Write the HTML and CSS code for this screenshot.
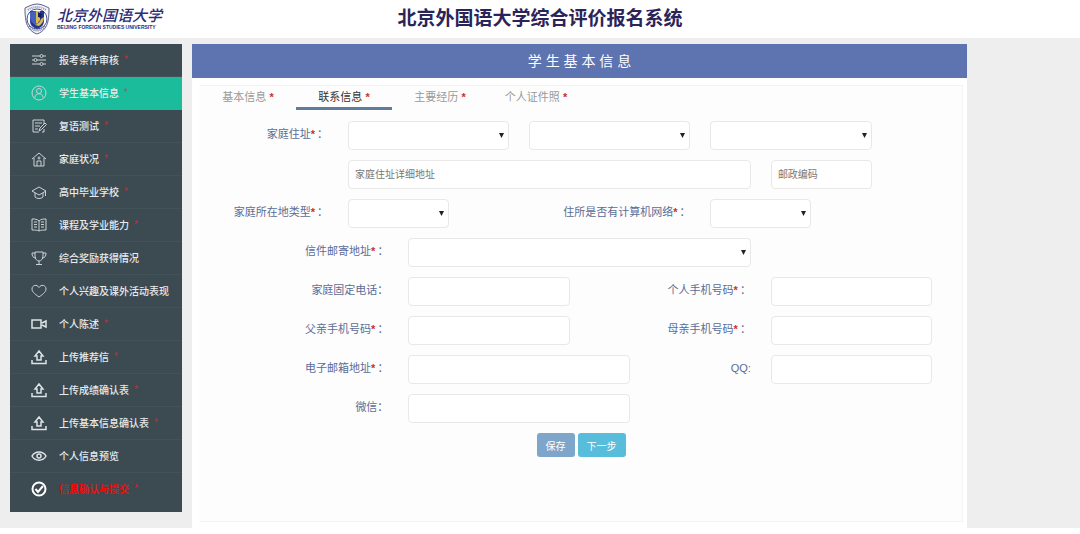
FILE: index.html
```html
<!DOCTYPE html>
<html lang="zh-CN">
<head>
<meta charset="utf-8">
<title>北京外国语大学综合评价报名系统</title>
<link rel="stylesheet" href="styles.css">
</head>
<body>
<header class="topbar">
  <a class="brand" href="#">
    <svg class="crest" viewBox="0 0 26 32" aria-hidden="true">
      <path d="M13 1C9 1 5 3 1 5c0 4 0 8 1 13 1 6 5 11 11 13 6-2 10-7 11-13 1-5 1-9 1-13-4-2-8-4-12-4z" fill="#f4f4fa" stroke="#5c628f" stroke-width="1"/>
      <path d="M4 7c5-4 13-4 18 0" fill="none" stroke="#8b90b5" stroke-width="2" stroke-dasharray="1 1"/>
      <circle cx="13" cy="16" r="10" fill="#fff" stroke="#4a5292" stroke-width="1"/>
      <path d="M6 8h14v10c0 5-4 7-7 8-3-1-7-3-7-8z" fill="#27348f"/>
      <path d="M6 9l6-1v14c-3-1-6-4-6-8z" fill="#4361bd"/>
      <path d="M12 8h4v9l-3 4-1-1zM17 16l3-2c0 4-2 7-5 9l-4-1c3-1 5-3 6-6z" fill="#d9bc4c"/>
      <path d="M14 9l4 2-1 4-3-1z" fill="#171d5b"/>
      <path d="M5 23c4 6 12 6 16 0" fill="none" stroke="#737aa8" stroke-width="2" stroke-dasharray="1 1"/>
    </svg>
    <span class="brand-text">
      <span class="brand-cn">北京外国语大学</span>
      <span class="brand-en">BEIJING FOREIGN STUDIES UNIVERSITY</span>
    </span>
  </a>
  <h1 class="system-title">北京外国语大学综合评价报名系统</h1>
</header>

<div class="layout">
  <nav class="sidebar" aria-label="报名步骤">
    <a class="step" href="#"><svg class="icon" viewBox="0 0 16 16"><path d="M1 4h8M12 4h3M1 8h2M6 8h9M1 12h8M12 12h3"/><circle cx="10.500" cy="4" r="1.500"/><circle cx="4.500" cy="8" r="1.500"/><circle cx="10.500" cy="12" r="1.500"/></svg><span>报考条件审核</span><i class="mark">*</i></a>
    <a class="step active" href="#" aria-current="page"><svg class="icon" viewBox="0 0 16 16"><circle cx="8" cy="8" r="7"/><circle cx="8" cy="6" r="2.500"/><path d="M4 12.500c0-5 8-5 8 0"/></svg><span>学生基本信息</span><i class="mark">*</i></a>
    <a class="step" href="#"><svg class="icon" viewBox="0 0 16 16"><path d="M13 6V2H2v12h6M13 11v3h-2M4 5h7M4 8h5M4 11h3M8 13l1-3 5-5 1.500 1.500-5 5z"/></svg><span>复语测试</span><i class="mark">*</i></a>
    <a class="step" href="#"><svg class="icon" viewBox="0 0 16 16"><path d="M1 8l7-6 7 6M3 7v8h10V7M6 15v-5h4v5"/><circle cx="8" cy="7" r="1"/></svg><span>家庭状况</span><i class="mark">*</i></a>
    <a class="step" href="#"><svg class="icon" viewBox="0 0 16 16"><path d="M1 7l7-4 7 4-7 4zM4 9v4c2 2 6 2 8 0V9M14.500 7v5"/></svg><span>高中毕业学校</span><i class="mark">*</i></a>
    <a class="step" href="#"><svg class="icon" viewBox="0 0 16 16"><path d="M8 4C6 2 4 2 1 2v11c3 0 5 0 7 1 2-1 4-1 7-1V2c-3 0-5 0-7 2zM8 4v10M3 5h3M3 7.500h3M3 10h3M10 5h3M10 7.500h3M10 10h3"/></svg><span>课程及学业能力</span><i class="mark">*</i></a>
    <a class="step" href="#"><svg class="icon" viewBox="0 0 16 16"><path d="M4 2h8v4c0 3-2 5-4 5S4 9 4 6zM4 3H1c0 3 1 5 4 5M12 3h3c0 3-1 5-4 5M8 11v3M5 14.500h6"/></svg><span>综合奖励获得情况</span></a>
    <a class="step" href="#"><svg class="icon" viewBox="0 0 16 16"><path d="M8 14C3 10.500 1 8.500 1 6c0-4 5-5 7-1.500C10 1 15 2 15 6c0 2.500-2 4.500-7 8z"/></svg><span>个人兴趣及课外活动表现</span></a>
    <a class="step" href="#"><svg class="icon bold" viewBox="0 0 16 16"><path d="M1 4h9v8H1zM11 7l4-2v6l-4-2"/></svg><span>个人陈述</span><i class="mark">*</i></a>
    <a class="step" href="#"><svg class="icon bold" viewBox="0 0 16 16"><path d="M6 11V7H4l4-5 4 5h-2v4zM1 11v3.500h14V11"/></svg><span>上传推荐信</span><i class="mark">*</i></a>
    <a class="step" href="#"><svg class="icon bold" viewBox="0 0 16 16"><path d="M6 11V7H4l4-5 4 5h-2v4zM1 11v3.500h14V11"/></svg><span>上传成绩确认表</span><i class="mark">*</i></a>
    <a class="step" href="#"><svg class="icon bold" viewBox="0 0 16 16"><path d="M6 11V7H4l4-5 4 5h-2v4zM1 11v3.500h14V11"/></svg><span>上传基本信息确认表</span><i class="mark">*</i></a>
    <a class="step" href="#"><svg class="icon bold" viewBox="0 0 16 16"><path d="M1 8c3-5.500 11-5.500 14 0-3 5.500-11 5.500-14 0z"/><circle cx="8" cy="8" r="2"/></svg><span>个人信息预览</span></a>
    <a class="step submit" href="#"><svg class="icon heavy" viewBox="0 0 16 16"><circle cx="8" cy="8" r="6.500"/><path d="M4.500 8l2.500 3 5-6"/></svg><span>信息确认与提交</span><i class="mark">*</i></a>
  </nav>

  <main class="panel">
    <h2 class="panel-title">学 生 基 本 信 息</h2>
    <div class="panel-body">
      <nav class="tabs" aria-label="信息分类">
        <a class="tab" href="#">基本信息 <b class="req">*</b></a>
        <a class="tab current" href="#" aria-current="true">联系信息 <b class="req">*</b></a>
        <a class="tab" href="#">主要经历 <b class="req">*</b></a>
        <a class="tab" href="#">个人证件照 <b class="req">*</b></a>
      </nav>
      <form>
        <div class="fields">
          <label class="to-8" for="province">家庭住址<b class="req">*</b>：</label>
          <select class="at-8 span-8" id="province"><option></option></select>
          <select class="at-17 span-8" aria-label="城市"><option></option></select>
          <select class="at-26 span-8" aria-label="区县"><option></option></select>

          <input class="at-8 span-20" type="text" placeholder="家庭住址详细地址" aria-label="家庭住址详细地址">
          <input class="at-29 span-5" type="text" placeholder="邮政编码" aria-label="邮政编码">

          <label class="to-8" for="area">家庭所在地类型<b class="req">*</b>：</label>
          <select class="at-8 span-5" id="area"><option></option></select>
          <label class="to-26" for="network">住所是否有计算机网络<b class="req">*</b>：</label>
          <select class="at-26 span-5" id="network"><option></option></select>

          <label class="to-11" for="mailing">信件邮寄地址<b class="req">*</b>：</label>
          <select class="at-11 span-17" id="mailing"><option></option></select>

          <label class="to-11" for="phone">家庭固定电话：</label>
          <input class="at-11 span-8" type="tel" id="phone">
          <label class="to-29" for="mobile">个人手机号码<b class="req">*</b>：</label>
          <input class="at-29 span-8" type="tel" id="mobile">

          <label class="to-11" for="father">父亲手机号码<b class="req">*</b>：</label>
          <input class="at-11 span-8" type="tel" id="father">
          <label class="to-29" for="mother">母亲手机号码<b class="req">*</b>：</label>
          <input class="at-29 span-8" type="tel" id="mother">

          <label class="to-11" for="email">电子邮箱地址<b class="req">*</b>：</label>
          <input class="at-11 span-11" type="email" id="email">
          <label class="to-29" for="qq">QQ:</label>
          <input class="at-29 span-8" type="text" id="qq">

          <label class="to-11" for="wechat">微信：</label>
          <input class="at-11 span-11" type="text" id="wechat">
        </div>
        <div class="actions">
          <button class="save" type="button">保存</button>
          <button class="next" type="button">下一步</button>
        </div>
      </form>
    </div>
  </main>
</div>
</body>
</html>
```
FILE: styles.css
```css
* {
  box-sizing: border-box;
}

body {
  margin: 0;
  background: #fff;
  color: #5b6c96;
  font-family: "Liberation Sans", "Noto Sans CJK SC", sans-serif;
  font-size: 11px;
}

a {
  color: inherit;
  text-decoration: none;
}

/* Header */
.topbar {
  display: grid;
  grid-template-columns: 1fr auto 1fr;
  align-items: center;
  height: 38px;
  padding: 0 24px;
}

.brand {
  display: flex;
  align-items: center;
  gap: 7px;
  color: #2c2d76;
}

.crest {
  width: 26px;
  height: 32px;
}

.brand-text {
  display: flex;
  flex-direction: column;
}

.brand-cn {
  font-size: 15px;
  font-style: italic;
  font-weight: 500;
  line-height: 17px;
}

.brand-en {
  font-size: 5px;
  font-weight: 700;
  line-height: 7px;
  white-space: nowrap;
}

.system-title {
  margin: 0;
  color: #2b2459;
  font-size: 19px;
  font-weight: 700;
  line-height: 28px;
}

/* Page columns */
.layout {
  display: flex;
  align-items: flex-start;
  gap: 10px;
  padding: 6px 113px 0 10px;
  background: #eee;
}

.sidebar {
  flex: 0 0 172px;
  padding-bottom: 6px;
  background: #3c4a51;
  color: #e6ebed;
}

.step {
  display: flex;
  align-items: center;
  height: 33px;
  padding-bottom: 1px;
  padding-left: 21px;
  border-bottom: 1px solid #435158;
  font-size: 10px;
  font-weight: 500;
  white-space: nowrap;
}

.step.active {
  border-color: #1bbc9b;
  background: #1bbc9b;
}

.step.submit {
  border-color: transparent;
}

.step.submit span {
  color: #f00d0d;
  font-weight: 700;
}

.icon {
  width: 16px;
  height: 16px;
  margin-right: 12px;
  fill: none;
  stroke: #c9d3d6;
  stroke-width: 1;
}

.icon.bold {
  stroke: #dde4e6;
  stroke-width: 1.5;
}

.icon.heavy {
  stroke: #fff;
  stroke-width: 2;
}

.mark {
  margin-left: 5px;
  color: #b8333a;
  font-style: normal;
}

.active .mark {
  color: #8a6a52;
}

.submit .mark {
  color: #f00d0d;
}

/* Main panel */
.panel {
  flex: 1;
  min-width: 0;
  padding-bottom: 6px;
  background: #fff;
}

.panel-title {
  margin: 0;
  background: #5d74b0;
  color: #fff;
  font-size: 14px;
  font-weight: 400;
  line-height: 34px;
  text-align: center;
}

.panel-body {
  margin: 7px 4px 0 7px;
  padding-bottom: 64px;
  border: 1px solid #f3f3f3;
  border-left-color: #fdfdfd;
  background: #fdfdfd;
}

.tabs {
  display: flex;
}

.tab {
  width: 96px;
  height: 24px;
  border-bottom: 3px solid transparent;
  color: #999;
  line-height: 22px;
  text-align: center;
}

.tab.current {
  border-color: #5f7c9e;
  color: #333;
}

.req {
  color: #c9302c;
  font-weight: 700;
}

/* Form grid: 36 equal tracks, 29px rows */
.fields {
  display: grid;
  grid-template-columns: repeat(36, minmax(0, 1fr));
  grid-auto-rows: 29px;
  row-gap: 10px;
  padding: 11px 30px 10px 7px;
}

label {
  padding-right: 20px;
  line-height: 26px;
  text-align: right;
  white-space: nowrap;
}

label .req {
  margin-right: 2px;
}

input,
select {
  width: 100%;
  min-width: 0;
  height: 29px;
  margin: 0;
  padding: 0 6px;
  border: 1px solid #e8e8e8;
  border-radius: 4px;
  background-color: #fff;
  color: #444;
  font: inherit;
  font-size: 10px;
}

input::placeholder {
  color: #777;
}

select {
  appearance: none;
  background-image: url("data:image/svg+xml,%3Csvg xmlns='http://www.w3.org/2000/svg' width='5' height='5'%3E%3Cpath d='M0 0h5L2.5 5z' fill='%23222'/%3E%3C/svg%3E");
  background-position: right 4px center;
  background-repeat: no-repeat;
}

.to-8 { grid-column: 1 / 8; }
.to-11 { grid-column: 1 / 11; }
.to-26 { grid-column: 17 / 26; }
.to-29 { grid-column: 22 / 29; }

.at-8 { grid-column-start: 8; }
.at-11 { grid-column-start: 11; }
.at-17 { grid-column-start: 17; }
.at-26 { grid-column-start: 26; }
.at-29 { grid-column-start: 29; }

.span-5 { grid-column-end: span 5; }
.span-8 { grid-column-end: span 8; }
.span-11 { grid-column-end: span 11; }
.span-17 { grid-column-end: span 17; }
.span-20 { grid-column-end: span 20; }

.actions {
  display: flex;
  justify-content: center;
  gap: 3px;
}

button {
  height: 24px;
  padding: 0 9px;
  border: 0;
  border-radius: 3px;
  color: #fff;
  font: inherit;
  font-size: 10px;
}

.save {
  background: #7ea6cb;
}

.next {
  background: #58bcdb;
}
```
